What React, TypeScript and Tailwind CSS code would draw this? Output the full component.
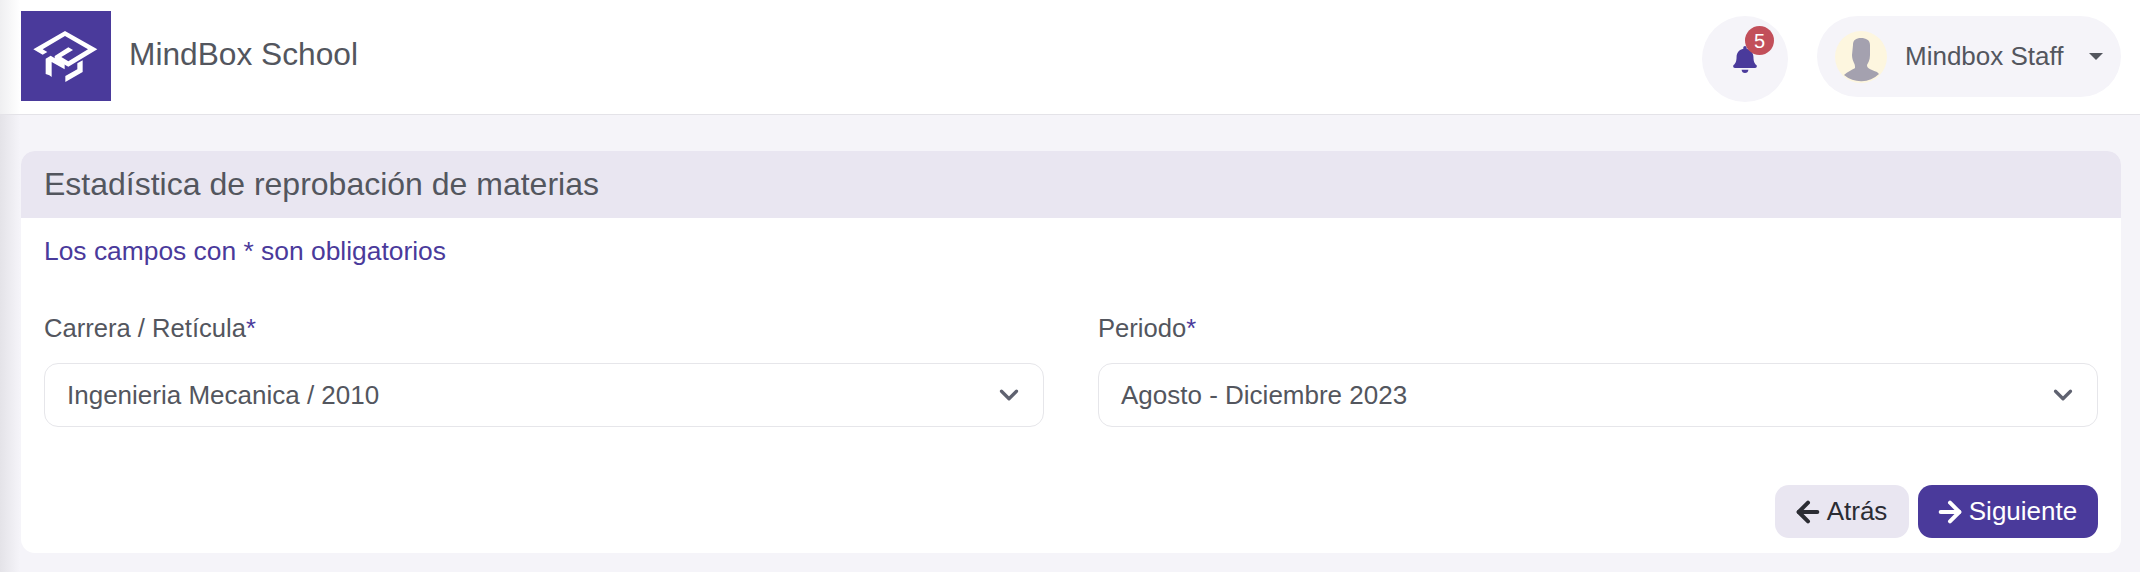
import { ArrowLeft, ArrowRight, ChevronDown } from "lucide-react"
import { FaBell } from "react-icons/fa"

function Logo() {
    return (
        <div className="w-[90px] h-[90px] bg-[#4a3a9b] shrink-0">
            <svg viewBox="63 33 270 270" className="w-full h-full" fill="#fff">
                <path d="M100 148 L195 93 L292 148 L205 200 L164 177 L164 168 L205 142 L219 150 L184 171 L205 184 L264 148 L195 108 L128 148 L142 156 L128 164 Z" />
                <path d="M137 176 L152 167 L194 192 L194 208 L155 186 L155 231 L148 226 L137 222 Z" />
                <path d="M196 228 L232 208 L232 190 L248 181 L248 216 L196 246 Z" />
            </svg>
        </div>
    )
}

function Avatar() {
    return (
        <svg viewBox="0 0 52 52" className="w-[52px] h-[52px] shrink-0">
            <circle cx="26" cy="26" r="26" fill="#fdf6df" />
            <path d="M18 14 C18 9 21 7 26 7 C31 7 35 9 35 14 L35 24 C35 29 33 32 32 34 C32 37 34 38 42 41 L44 43 A26 26 0 0 1 9 44 C12 41 19 38 20 37 C20 35 20 34 19 32 C18 30 17 27 17 24 Z" fill="#a4a1af" />
        </svg>
    )
}

function SelectBox({ label, value }: { label: string; value: string }) {
    return (
        <div className="flex-1">
            <label className="block text-[25.6px] leading-[36px] text-[#53565e] mb-[17px]">
                {label}<span className="text-[#4a3a9b]">*</span>
            </label>
            <div className="h-[64px] flex items-center justify-between pl-[22px] pr-[19px] bg-white border border-[#e6e6ea] rounded-[14px]">
                <span className="text-[26px] text-[#53565e]">{value}</span>
                <ChevronDown className="w-[30px] h-[30px] text-[#5f6270]" strokeWidth={2.6} />
            </div>
        </div>
    )
}

export default function App() {
    return (
        <div className="relative h-[572px] bg-[#f5f4f9] font-['Liberation_Sans',sans-serif]">
            <div className="absolute inset-y-0 left-0 w-[20px] bg-gradient-to-r from-[#e4e3e8] to-transparent" />

            <header className="relative h-[115px] bg-white border-b border-[#e4e3e8] flex items-center justify-between pl-[21px] pr-[19px]">
                <div className="absolute inset-y-0 left-0 w-[20px] bg-gradient-to-r from-[#efeff1] to-transparent" />
                <div className="relative flex items-center gap-[19px] -mt-[2px]">
                    <Logo />
                    <span className="text-[31.7px] text-[#53565e] -mt-[2px] -ml-[1px]">MindBox School</span>
                </div>
                <div className="flex items-start gap-[29px] self-start pt-[16px]">
                    <div className="relative w-[86px] h-[86px] rounded-full bg-[#f5f4f9] flex items-center justify-center">
                        <FaBell className="w-[24px] h-[27px] text-[#4a3a9b] mr-[1px]" />
                        <span className="absolute left-[43px] top-[10px] w-[29px] h-[29px] rounded-full bg-[#c24f5a] text-white text-[20px] flex items-center justify-center">5</span>
                    </div>
                    <div className="h-[81px] w-[304px] rounded-full bg-[#f5f4f9] flex items-center pl-[18px] pr-[18px]">
                        <Avatar />
                        <span className="ml-[18px] text-[26px] text-[#53565e]">Mindbox Staff</span>
                        <span className="ml-auto w-0 h-0 border-x-[7px] border-x-transparent border-t-[7px] border-t-[#53565e]" />
                    </div>
                </div>
            </header>

            <main className="relative pt-[36px] px-[19px] pl-[21px]">
                <section className="h-[402px] bg-white rounded-[14px] overflow-hidden">
                    <div className="h-[67px] bg-[#e9e6f1] flex items-center px-[23px] pb-[2px]">
                        <h2 className="text-[32px] text-[#53565e]">Estadística de reprobación de materias</h2>
                    </div>
                    <div className="px-[23px]">
                        <p className="mt-[15px] text-[26.4px] leading-[36px] text-[#4a3a9b]">Los campos con * son obligatorios</p>
                        <div className="mt-[41px] flex gap-[54px]">
                            <SelectBox label="Carrera / Retícula" value="Ingenieria Mecanica / 2010" />
                            <SelectBox label="Periodo" value="Agosto - Diciembre 2023" />
                        </div>
                        <div className="mt-[58px] flex justify-end gap-[9px]">
                            <button className="h-[53px] w-[134px] pr-[5px] rounded-[14px] bg-[#e9e6f1] text-[#2b2c33] text-[26px] flex items-center justify-center gap-[3px]">
                                <ArrowLeft className="w-[32px] h-[32px]" strokeWidth={3} />
                                Atrás
                            </button>
                            <button className="h-[53px] w-[180px] pr-[5px] rounded-[14px] bg-[#4a3a9b] text-white text-[26px] flex items-center justify-center gap-[3px]">
                                <ArrowRight className="w-[32px] h-[32px]" strokeWidth={3} />
                                Siguiente
                            </button>
                        </div>
                    </div>
                </section>
            </main>
        </div>
    )
}
